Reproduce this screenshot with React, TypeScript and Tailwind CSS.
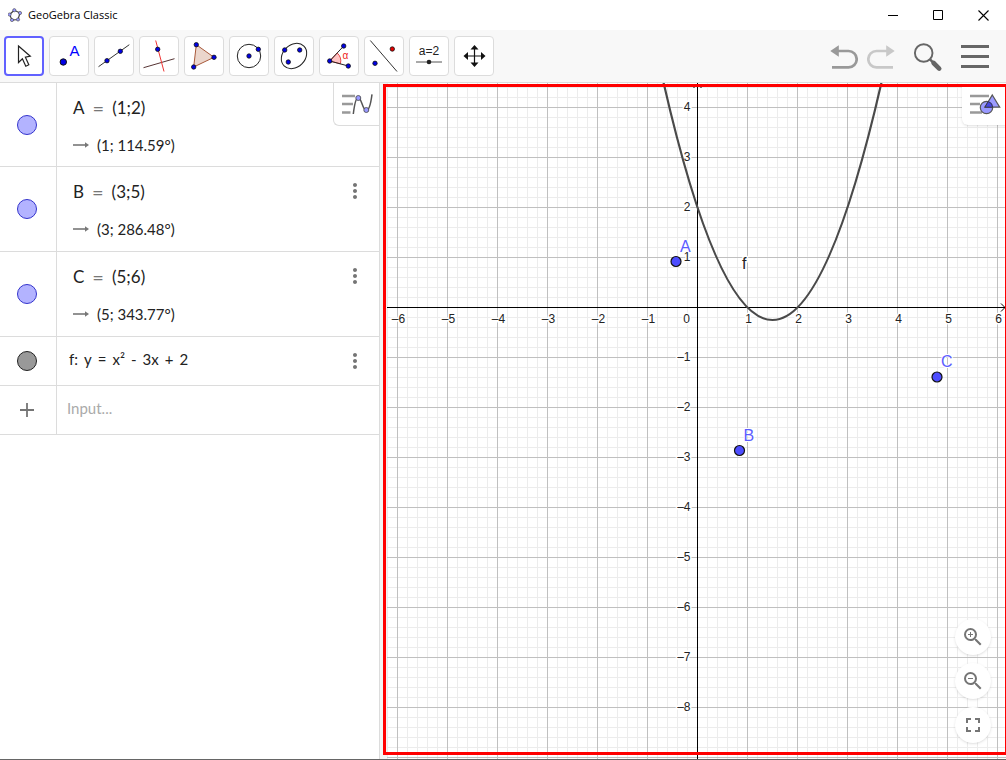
import type { ReactNode } from "react";
import { MdFullscreen, MdMoreVert, MdZoomIn, MdZoomOut } from "react-icons/md";

interface Tool {
  name: string;
  icon: ReactNode;
}

interface PointRow {
  name: string;
  coords: string;
  polar: string;
}

function Dot({ x, y, color = "#0000e6" }: { x: number; y: number; color?: string }) {
  return <circle cx={x} cy={y} r="2.2" fill={color} stroke="#111" strokeWidth="0.8" />;
}

const tools: Tool[] = [
  {
    name: "Move",
    icon: (
      <path d="M14.5 10L26.3 20.2L21.4 21.2L24.8 28.8L21.8 30.2L18.4 22.8L14.5 26.5Z" fill="#fff" stroke="#222" strokeWidth="1.2" />
    ),
  },
  {
    name: "Point",
    icon: (
      <>
        <circle cx="14.3" cy="26" r="3.2" fill="#0000e6" stroke="#111" />
        <text x="20.5" y="19.5" fontSize="15" fill="#0000ff">A</text>
      </>
    ),
  },
  {
    name: "Line",
    icon: (
      <>
        <path d="M4.5 30.7L35.3 8.7" stroke="#333" />
        <Dot x={13} y={24.7} />
        <Dot x={26.3} y={15.3} />
      </>
    ),
  },
  {
    name: "Perpendicular line",
    icon: (
      <>
        <path d="M4.5 31.7L35.5 22.7" stroke="#553333" />
        <path d="M16.7 4.5L25 35.5" stroke="#ee3333" />
        <Dot x={18.7} y={13.3} />
      </>
    ),
  },
  {
    name: "Polygon",
    icon: (
      <>
        <path d="M12.3 8.7L30 21.3L9.7 31Z" fill="#ebd6cc" stroke="#a8593a" />
        <Dot x={12.3} y={8.7} />
        <Dot x={30} y={21.3} />
        <Dot x={9.7} y={31} />
      </>
    ),
  },
  {
    name: "Circle with center",
    icon: (
      <>
        <circle cx="20" cy="20" r="11.7" fill="none" stroke="#222" />
        <Dot x={20} y={20} />
        <Dot x={29.3} y={13.3} />
      </>
    ),
  },
  {
    name: "Ellipse",
    icon: (
      <>
        <ellipse cx="20" cy="20" rx="14" ry="11.2" transform="rotate(-45 20 20)" fill="none" stroke="#222" />
        <Dot x={10.7} y={14} />
        <Dot x={25.7} y={14} />
        <Dot x={14.3} y={26} />
      </>
    ),
  },
  {
    name: "Angle",
    icon: (
      <>
        <path d="M10.7 25L18.2 17A11 11 0 0 1 21.4 27.8Z" fill="#ffc4c4" stroke="#e02020" strokeWidth="0.8" />
        <path d="M24.7 10L10.7 25L29.3 30" fill="none" stroke="#222" />
        <text x="23.5" y="23" fontSize="10" fill="#ee2222">α</text>
        <Dot x={24.7} y={10} />
        <Dot x={10.7} y={25} />
        <Dot x={29.3} y={30} />
      </>
    ),
  },
  {
    name: "Reflect about line",
    icon: (
      <>
        <path d="M6.3 4.5L33 35.5" stroke="#333" />
        <Dot x={28.3} y={13} color="#e60000" />
        <Dot x={11} y={27.3} />
      </>
    ),
  },
  {
    name: "Slider",
    icon: (
      <>
        <text x="20" y="19" fontSize="12" textAnchor="middle" fill="#222">a=2</text>
        <path d="M7 26H33" stroke="#555" />
        <circle cx="20" cy="26" r="2.3" fill="#222" />
      </>
    ),
  },
  {
    name: "Move graphics view",
    icon: (
      <>
        <path d="M13 20H28M20.5 13V27" stroke="#111" strokeWidth="1.2" />
        <path d="M20.5 9L24.5 13.5H16.5ZM20.5 31L24.5 26.5H16.5ZM9.5 20L14 16V24ZM31.5 20L27 16V24Z" fill="#111" />
      </>
    ),
  },
];

const points: PointRow[] = [
  { name: "A", coords: "(1;2)", polar: "(1; 114.59°)" },
  { name: "B", coords: "(3;5)", polar: "(3; 286.48°)" },
  { name: "C", coords: "(5;6)", polar: "(5; 343.77°)" },
];

const equation = ["f:", "y", "=", "x²", "-", "3x", "+", "2"];

// Graphics view: pixels per unit and position of the origin
const UNIT = 50;
const OX = 310.5;
const OY = 224.5;

const range = (from: number, to: number) =>
  Array.from({ length: to - from + 1 }, (_, i) => from + i);

const px = (x: number) => OX + x * UNIT;
const py = (y: number) => OY - y * UNIT;
const label = (n: number) => (n < 0 ? `–${-n}` : `${n}`);

const plotted = [
  { name: "A", x: 289, y: 178.5 },
  { name: "B", x: 352.5, y: 367.5 },
  { name: "C", x: 550, y: 294 },
];

function TitleBar() {
  return (
    <header className="flex h-[30px] items-center bg-white pl-2">
      <svg className="mr-[6px] h-[14px] w-[14px]" viewBox="0 0 14 14">
        <path d="M6.3 2.2L12 5L10 11.5L4 12L1.6 6.5Z" fill="none" stroke="#444" strokeWidth="1.2" />
        {[[6.3, 2.2], [12, 5], [10, 11.5], [4, 12], [1.6, 6.5]].map(([x, y]) => (
          <circle key={x} cx={x} cy={y} r="1.6" fill="#9999ff" stroke="#444" strokeWidth="0.6" />
        ))}
      </svg>
      <h1 className="flex-1 font-['Open_Sans',sans-serif] text-[11px] text-black">GeoGebra Classic</h1>
      <div className="flex h-full">
        <button aria-label="Minimize" className="flex w-[45px] items-center justify-center">
          <svg className="h-[11px] w-[11px]" viewBox="0 0 11 11"><path d="M0 5.5H10" stroke="#000" /></svg>
        </button>
        <button aria-label="Maximize" className="flex w-[45px] items-center justify-center">
          <svg className="h-[11px] w-[11px]" viewBox="0 0 11 11"><path d="M0.5 0.5H9.5V9.5H0.5Z" fill="none" stroke="#000" /></svg>
        </button>
        <button aria-label="Close" className="flex w-[45px] items-center justify-center">
          <svg className="h-[11px] w-[11px]" viewBox="0 0 11 11"><path d="M0.5 0.5L10.5 10.5M10.5 0.5L0.5 10.5" stroke="#000" strokeWidth="1.1" /></svg>
        </button>
      </div>
    </header>
  );
}

function Toolbar() {
  return (
    <div className="flex h-[53px] items-center justify-between border-b border-[#dcdcdc] bg-[#f8f8f8] pl-1 pr-[17px]">
      <div className="flex gap-[5px]">
        {tools.map((tool, index) => (
          <button
            key={tool.name}
            aria-label={tool.name}
            className={`flex h-10 w-10 items-center justify-center rounded bg-white ${
              index === 0 ? "border-2 border-[#6161ff]" : "border border-[#dcdcdc]"
            }`}
          >
            <svg className="h-8 w-8 shrink-0" viewBox="4 4 32 32">{tool.icon}</svg>
          </button>
        ))}
      </div>
      <div className="flex items-center gap-[19px]">
        <div className="flex gap-[9px]">
          <button aria-label="Undo">
            <svg className="h-7 w-7" viewBox="0 0 28 28">
              <path d="M8 9H18.5A8.1 8.1 0 0 1 18.5 25.4H2" fill="none" stroke="#999" strokeWidth="2.7" />
              <path d="M0.3 9L8.8 3.3V14.7Z" fill="#999" />
            </svg>
          </button>
          <button aria-label="Redo">
            <svg className="h-7 w-7" viewBox="0 0 28 28">
              <path d="M20 9H9.5A8.1 8.1 0 0 0 9.5 25.4H26" fill="none" stroke="#c8c8c8" strokeWidth="2.7" />
              <path d="M27.7 9L19.2 3.3V14.7Z" fill="#c8c8c8" />
            </svg>
          </button>
        </div>
        <button aria-label="Search">
          <svg className="h-7 w-7 overflow-visible" viewBox="0 0 28 28">
            <circle cx="9.7" cy="11" r="8.8" fill="none" stroke="#666" strokeWidth="1.9" />
            <path d="M16 17.4L19 20.4" stroke="#666" strokeWidth="2.4" />
            <path d="M19.6 21L25.2 26.6" stroke="#666" strokeWidth="4.6" strokeLinecap="round" />
          </svg>
        </button>
        <button aria-label="Menu">
          <svg className="h-7 w-7" viewBox="0 0 28 28">
            <path d="M0 4.5H28M0 14.5H28M0 24.5H28" stroke="#666" strokeWidth="3" />
          </svg>
        </button>
      </div>
    </div>
  );
}

function MoreButton() {
  return (
    <button aria-label="More" className="mr-3 mt-3 h-6 w-6 shrink-0 text-[#757575]">
      <MdMoreVert size={24} />
    </button>
  );
}

function Marble({ name, color }: { name: string; color: string }) {
  return (
    <div className="flex w-[57px] shrink-0 items-center justify-center border-r border-[#dcdcdc] pr-0.5">
      <button aria-label={`Show or hide ${name}`} className={`h-5 w-5 rounded-full border ${color}`} />
    </div>
  );
}

function AlgebraView() {
  return (
    <aside className="relative w-[380px] shrink-0 border-r border-[#dcdcdc] bg-white font-[Lato,sans-serif] text-[#222]">
      {points.map((point, index) => (
        <div
          key={point.name}
          className={`flex border-b border-[#dcdcdc] ${index === 0 ? "h-[84px]" : "h-[85px]"}`}
        >
          <Marble name={point.name} color="border-[#3333cc] bg-[#b3b3ff]" />
          <div className="flex flex-1 flex-col justify-center gap-[15px] pl-4 pt-[3px]">
            <div className="flex gap-2 text-[17px] leading-[22px]">
              <span>{point.name}</span>
              <span className="text-xl leading-[22px] text-[#777]">=</span>
              <span>{point.coords}</span>
            </div>
            <div className="flex items-center gap-2 text-[15px] leading-[22px]">
              <svg className="h-2 w-4" viewBox="0 0 16 8">
                <path d="M0 4H13" stroke="#777" strokeWidth="1.6" />
                <path d="M12 1.2L16 4L12 6.8Z" fill="#777" />
              </svg>
              <span>{point.polar}</span>
            </div>
          </div>
          {index > 0 && <MoreButton />}
        </div>
      ))}
      <div className="flex h-[49px] border-b border-[#dcdcdc]">
        <Marble name="f" color="border-[#222] bg-[#999]" />
        <div className="flex flex-1 items-center gap-[6px] pb-1 pl-3 text-[15px]">
          {equation.map((part) => (
            <span key={part}>{part}</span>
          ))}
        </div>
        <MoreButton />
      </div>
      <div className="flex h-[49px] border-b border-[#dcdcdc]">
        <div className="flex w-[57px] shrink-0 items-center justify-center border-r border-[#dcdcdc] pr-0.5">
          <button aria-label="Add">
            <svg className="h-[14px] w-[14px]" viewBox="0 0 14 14"><path d="M0 7H14M7 0V14" stroke="#757575" strokeWidth="1.8" /></svg>
          </button>
        </div>
        <input
          aria-label="Input"
          placeholder="Input..."
          className="min-w-0 flex-1 pb-1 pl-[10px] text-[15px] outline-none placeholder:text-[#aaa]"
        />
      </div>
      <button
        aria-label="Algebra style bar"
        className="absolute right-0 top-0 h-[43px] w-[46px] rounded-bl-md border-b border-l border-[#dcdcdc] bg-white pl-[7px]"
      >
        <svg className="h-6 w-8" viewBox="0 0 32 24">
          <path d="M1 4H14M1 12H12M1 20.5H9.5" stroke="#999" strokeWidth="2.4" />
          <path d="M12.3 22C13.5 12 15 5.5 17.3 5.5C20.5 5.5 21.5 18.5 25.3 18.5C28.5 18.5 30 10 31 2.3" fill="none" stroke="#555" strokeWidth="1.5" />
          <circle cx="17.3" cy="6" r="2.5" fill="#9999ff" stroke="#444" strokeWidth="0.8" />
          <circle cx="25.3" cy="18" r="2.5" fill="#9999ff" stroke="#444" strokeWidth="0.8" />
        </svg>
      </button>
    </aside>
  );
}

function Plot() {
  return (
    <svg className="absolute inset-0 h-full w-full" fontFamily="Liberation Sans, Arial, sans-serif">
      {range(-31, 150).map((i) => (
        <line key={`v${i}`} x1={OX + i * 10} x2={OX + i * 10} y1="0" y2="100%" stroke={i % 5 === 0 ? "#c0c0c0" : "#ececec"} />
      ))}
      {range(-22, 120).map((i) => (
        <line key={`h${i}`} x1="0" x2="100%" y1={OY + i * 10} y2={OY + i * 10} stroke={i % 5 === 0 ? "#c0c0c0" : "#ececec"} />
      ))}
      {/* major lines go over the minor ones */}
      {range(-6, 30).map((n) => (
        <line key={`V${n}`} x1={px(n)} x2={px(n)} y1="0" y2="100%" stroke="#c0c0c0" />
      ))}
      <line x1="0" x2="100%" y1={OY} y2={OY} stroke="#000" />
      <line x1={OX} x2={OX} y1="0" y2="100%" stroke="#000" />
      <path d={`M${OX - 4} 5L${OX} 1L${OX + 4} 5`} fill="none" stroke="#000" />
      <svg x="100%" y={OY} overflow="visible">
        <path d="M-5 -4L-1 0L-5 4" fill="none" stroke="#000" />
      </svg>

      <g fontSize="12" fill="#222" stroke="#fff" strokeWidth="3" paintOrder="stroke">
        {range(-6, 6).filter((n) => n !== 0).map((n) => (
          <text key={n} x={px(n) + 1} y={OY + 15.5} textAnchor="middle">{label(n)}</text>
        ))}
        {range(-8, 4).filter((n) => n !== 0).map((n) => (
          <text key={n} x={OX - 7} y={py(n) + 3} textAnchor="end">{label(n)}</text>
        ))}
        <text x={OX - 7.5} y={OY + 15.5} textAnchor="end">0</text>
      </g>

      {/* y = x² - 3x + 2 on [-1, 4] */}
      <path
        d={`M${px(-1)} ${py(6)}Q${px(1.5)} ${py(-6.5)} ${px(4)} ${py(6)}`}
        fill="none"
        stroke="#4a4a4a"
        strokeWidth="2.2"
      />
      <text x="355" y="186" fontSize="16" fill="#222" stroke="#fff" strokeWidth="3" paintOrder="stroke">f</text>

      {plotted.map((p) => (
        <g key={p.name}>
          <text x={p.x + 4} y={p.y - 10} fontSize="16" fill="#5c5cff" stroke="#fff" strokeWidth="2" paintOrder="stroke">
            {p.name}
          </text>
          <circle cx={p.x} cy={p.y} r="5" fill="#4d4dff" stroke="#111" strokeWidth="1.2" />
        </g>
      ))}
    </svg>
  );
}

function GraphicsView() {
  const controls = [
    { name: "Zoom in", icon: <MdZoomIn size={24} /> },
    { name: "Zoom out", icon: <MdZoomOut size={24} /> },
    { name: "Full screen", icon: <MdFullscreen size={24} /> },
  ];

  return (
    <main className="relative flex min-w-0 flex-1 overflow-hidden bg-[#f4f4f4] pl-[7px]">
      <div className="relative flex flex-1 flex-col items-end justify-between overflow-hidden bg-white">
        <Plot />
        <button
          aria-label="Graphics style bar"
          className="relative h-[42px] w-11 rounded-bl-md bg-white pl-[7px] shadow"
        >
          <svg className="h-6 w-8" viewBox="0 0 32 24">
            <path d="M1 4H20M1 12H11M1 20.5H13" stroke="#999" strokeWidth="2.4" />
            <circle cx="17.5" cy="15.5" r="6.2" fill="#9999ff" stroke="#555" strokeWidth="1.2" />
            <path d="M23.3 3L30.7 15.2H15.9Z" fill="#7a7aff" fillOpacity="0.75" stroke="#555" strokeWidth="1.2" />
            <path d="M19.2 9.6A6.2 6.2 0 0 1 23.7 15.2H15.9Z" fill="#4646e0" stroke="#333" strokeWidth="0.8" />
          </svg>
        </button>
        <div className="relative mb-4 mr-[15px] flex flex-col gap-2">
          {controls.map((control) => (
            <button
              key={control.name}
              aria-label={control.name}
              className="flex h-9 w-9 items-center justify-center rounded-full bg-white text-[#757575] shadow"
            >
              {control.icon}
            </button>
          ))}
        </div>
      </div>
      <div className="pointer-events-none absolute -right-0.5 bottom-1 left-[3px] top-px border-[3px] border-[#ff0000]" />
    </main>
  );
}

export default function App() {
  return (
    <div className="flex min-h-screen flex-col border-b border-[#666] bg-white font-['Liberation_Sans',Arial,sans-serif]">
      <TitleBar />
      <Toolbar />
      <div className="flex flex-1">
        <AlgebraView />
        <GraphicsView />
      </div>
    </div>
  );
}
